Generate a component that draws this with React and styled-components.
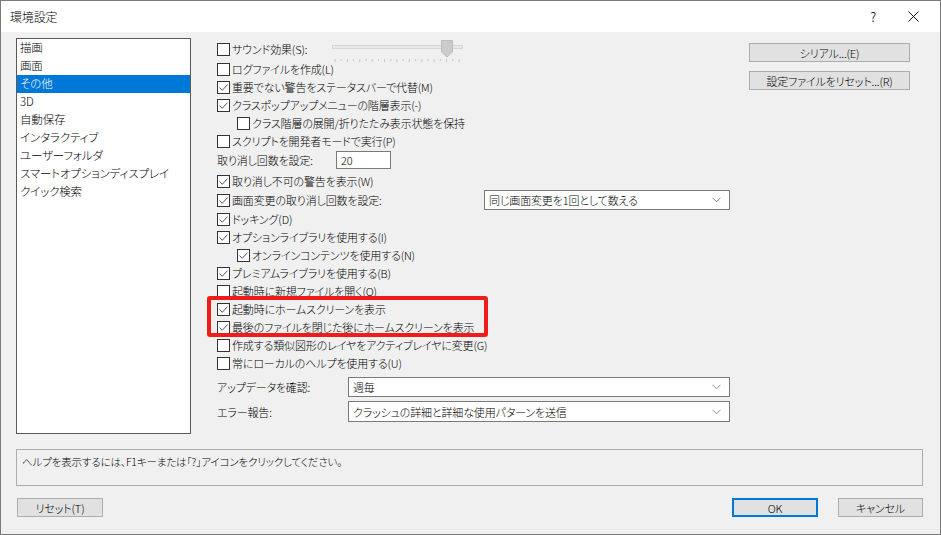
import styled, { createGlobalStyle } from 'styled-components';

const GlobalStyle = createGlobalStyle`
  html, body {
    margin: 0;
    padding: 0;
    background: #ffffff;
  }
  body {
    font-family: "Noto Sans CJK JP", "Noto Sans", sans-serif;
    font-size: 11px;
    font-weight: 300;
    color: #000;
    font-feature-settings: "palt";
    letter-spacing: -0.15px;
  }
`;

//whole dialog
const Window = styled.div`
  width: 941px;
  height: 535px;
  box-sizing: border-box;
  border: 1px solid #7a7a7a;
  background: #f0f0f0;
  display: flex;
  flex-direction: column;
  overflow: hidden;
`;

const TitleBar = styled.div`
  height: 31px;
  flex: none;
  background: #ffffff;
  display: flex;
  align-items: center;
  padding-left: 9px;
  font-size: 12px;
  .title {
    flex: 1;
  }
  .help {
    width: 20px;
    font-size: 13px;
    text-align: center;
    margin-right: 20px;
  }
  .close {
    width: 20px;
    display: flex;
    justify-content: center;
    margin-right: 17px;
  }
`;

const Body = styled.div`
  flex: 1;
  display: flex;
  flex-direction: column;
  padding: 6px 17px 0 15px;
`;

const MainRow = styled.div`
  display: flex;
  height: 396px;
`;

const CategoryList = styled.ul`
  list-style: none;
  margin: 0;
  padding: 0;
  width: 175px;
  height: 396px;
  box-sizing: border-box;
  border: 1px solid #5a5a5a;
  background: #ffffff;
`;

const CategoryItem = styled.li`
  height: 18px;
  line-height: 17px;
  padding-left: 3px;
  font-size: 11.5px;
  background: ${(p) => (p.$active ? '#0078d7' : 'transparent')};
  color: ${(p) => (p.$active ? '#ffffff' : '#000000')};
`;

const Options = styled.div`
  position: relative;
  margin-left: 26px;
  width: 513px;
  display: flex;
  flex-direction: column;
`;

const Row = styled.div`
  display: flex;
  align-items: ${(p) => (p.$top ? 'flex-start' : 'center')};
  height: ${(p) => p.$h || 18}px;
  margin-top: ${(p) => p.$mt || 0}px;
  padding-left: ${(p) => (p.$indent ? 20 : 0)}px;
  padding-top: ${(p) => (p.$top ? 3 : 0)}px;
  box-sizing: border-box;
  white-space: nowrap;
`;

const CheckLabel = styled.label`
  display: flex;
  align-items: center;
  width: ${(p) => (p.$w ? `${p.$w}px` : 'auto')};
  flex: none;
`;

const Box = styled.span`
  width: 13px;
  height: 13px;
  box-sizing: border-box;
  border: 1px solid #333333;
  background: #ffffff;
  margin-right: 2px;
  display: flex;
  align-items: center;
  justify-content: center;
  flex: none;
`;

const FieldLabel = styled.span`
  width: ${(p) => p.$w}px;
  flex: none;
`;

const NumberField = styled.div`
  width: 55px;
  height: 18px;
  box-sizing: border-box;
  border: 1px solid #7a7a7a;
  background: #ffffff;
  padding-left: 4px;
  line-height: 16px;
`;

const Select = styled.div`
  width: ${(p) => p.$w}px;
  height: ${(p) => p.$h || 20}px;
  margin-left: ${(p) => p.$ml || 0}px;
  box-sizing: border-box;
  border: 1px solid #7a7a7a;
  background: #ffffff;
  display: flex;
  align-items: center;
  padding: 0 8px 0 4px;
  span {
    flex: 1;
  }
`;

const Highlight = styled.div`
  position: absolute;
  left: -10px;
  top: 258px;
  width: 281px;
  height: 41px;
  box-sizing: border-box;
  border: 4px solid #f21b1b;
  border-radius: 3px;
  pointer-events: none;
`;

const SideButtons = styled.div`
  margin-left: 19px;
  padding-top: 5px;
  display: flex;
  flex-direction: column;
  gap: 9px;
`;

const Button = styled.button`
  width: ${(p) => p.$w}px;
  height: ${(p) => p.$h || 19}px;
  box-sizing: border-box;
  border: 1px solid ${(p) => (p.$primary ? '#0078d7' : '#adadad')};
  box-shadow: ${(p) => (p.$primary ? 'inset 0 0 0 1px #0078d7' : 'none')};
  background: #e1e1e1;
  font-family: inherit;
  font-size: 11px;
  font-weight: 300;
  letter-spacing: -0.15px;
  font-feature-settings: "palt";
  color: #000;
  padding: 0;
  line-height: 16px;
`;

const HelpBox = styled.div`
  margin-top: 15px;
  width: 907px;
  height: 37px;
  box-sizing: border-box;
  border: 1px solid #adadad;
  padding: 4px 0 0 5px;
  font-size: 10.5px;
`;

const Footer = styled.div`
  margin-top: 12px;
  width: 907px;
  display: flex;
  align-items: center;
  padding-left: 1px;
  box-sizing: border-box;
  .spacer {
    flex: 1;
  }
  .right {
    display: flex;
    gap: 20px;
  }
`;

const Check = ({ on }) => (
  <Box>
    {on && (
      <svg width="11" height="11" viewBox="0 0 11 11">
        <polyline points="1.5,5.5 4.2,8.3 9.6,2.6" fill="none" stroke="#555" strokeWidth="1" />
      </svg>
    )}
  </Box>
);

const CheckItem = ({ on, children, w }) => (
  <CheckLabel $w={w}>
    <Check on={on} />
    <span>{children}</span>
  </CheckLabel>
);

const Chevron = () => (
  <svg width="9" height="6" viewBox="0 0 9 6">
    <polyline points="0.5,0.8 4.5,4.8 8.5,0.8" fill="none" stroke="#8a8a8a" strokeWidth="1" />
  </svg>
);

const Slider = () => {
  const ticks = [];
  for (let i = 0; i <= 20; i++) ticks.push(3 + i * 6.2);
  return (
    <svg width="134" height="26" viewBox="0 0 134 26" style={{ marginTop: -3 }}>
      <rect x="0.5" y="7.5" width="130" height="3" fill="#e7eaea" stroke="#d6d6d6" />
      {ticks.map((x, i) => (
        <line key={i} x1={x} y1="21" x2={x} y2={i % 2 ? 23 : 24} stroke="#c4c4c4" strokeWidth="1" />
      ))}
      <polygon points="109.5,2.5 120.5,2.5 120.5,14 115,19 109.5,14" fill="#cccccc" stroke="#bdbdbd" />
    </svg>
  );
};

const categories = [
  '描画',
  '画面',
  'その他',
  '3D',
  '自動保存',
  'インタラクティブ',
  'ユーザーフォルダ',
  'スマートオプションディスプレイ',
  'クイック検索',
];

const App = () => {
  return (
    <>
      <GlobalStyle />
      <Window>
        <TitleBar>
          <span className="title">環境設定</span>
          <span className="help">?</span>
          <span className="close">
            <svg width="11" height="11" viewBox="0 0 11 11">
              <path d="M0.5 0.5 L10.5 10.5 M10.5 0.5 L0.5 10.5" stroke="#111" strokeWidth="1" />
            </svg>
          </span>
        </TitleBar>
        <Body>
          <MainRow>
            <CategoryList>
              {categories.map((c) => (
                <CategoryItem key={c} $active={c === 'その他'}>
                  {c}
                </CategoryItem>
              ))}
            </CategoryList>

            <Options>
              <Row $h={22} $top>
                <CheckItem w={115}>サウンド効果(S):</CheckItem>
                <Slider />
              </Row>
              <Row>
                <CheckItem>ログファイルを作成(L)</CheckItem>
              </Row>
              <Row>
                <CheckItem on>重要でない警告をステータスバーで代替(M)</CheckItem>
              </Row>
              <Row>
                <CheckItem on>クラスポップアップメニューの階層表示(-)</CheckItem>
              </Row>
              <Row $indent>
                <CheckItem>クラス階層の展開/折りたたみ表示状態を保持</CheckItem>
              </Row>
              <Row>
                <CheckItem>スクリプトを開発者モードで実行(P)</CheckItem>
              </Row>
              <Row $h={20}>
                <FieldLabel $w={119}>取り消し回数を設定:</FieldLabel>
                <NumberField>20</NumberField>
              </Row>
              <Row $mt={2}>
                <CheckItem on>取り消し不可の警告を表示(W)</CheckItem>
              </Row>
              <Row $h={20}>
                <CheckItem on w={267}>画面変更の取り消し回数を設定:</CheckItem>
                <Select $w={246}>
                  <span>同じ画面変更を1回として数える</span>
                  <Chevron />
                </Select>
              </Row>
              <Row>
                <CheckItem on>ドッキング(D)</CheckItem>
              </Row>
              <Row>
                <CheckItem on>オプションライブラリを使用する(I)</CheckItem>
              </Row>
              <Row $indent>
                <CheckItem on>オンラインコンテンツを使用する(N)</CheckItem>
              </Row>
              <Row>
                <CheckItem on>プレミアムライブラリを使用する(B)</CheckItem>
              </Row>
              <Row>
                <CheckItem>起動時に新規ファイルを開く(O)</CheckItem>
              </Row>
              <Row>
                <CheckItem on>起動時にホームスクリーンを表示</CheckItem>
              </Row>
              <Row>
                <CheckItem on>最後のファイルを閉じた後にホームスクリーンを表示</CheckItem>
              </Row>
              <Row>
                <CheckItem>作成する類似図形のレイヤをアクティブレイヤに変更(G)</CheckItem>
              </Row>
              <Row>
                <CheckItem>常にローカルのヘルプを使用する(U)</CheckItem>
              </Row>
              <Row $h={20} $mt={5}>
                <FieldLabel $w={131}>アップデータを確認:</FieldLabel>
                <Select $w={382}>
                  <span>週毎</span>
                  <Chevron />
                </Select>
              </Row>
              <Row $h={21} $mt={4}>
                <FieldLabel $w={131}>エラー報告:</FieldLabel>
                <Select $w={382} $h={21}>
                  <span>クラッシュの詳細と詳細な使用パターンを送信</span>
                  <Chevron />
                </Select>
              </Row>

              <Highlight />
            </Options>

            <SideButtons>
              <Button $w={161}>シリアル...(E)</Button>
              <Button $w={161}>設定ファイルをリセット...(R)</Button>
            </SideButtons>
          </MainRow>

          <HelpBox>ヘルプを表示するには、F1キーまたは「?」アイコンをクリックしてください。</HelpBox>

          <Footer>
            <Button $w={86}>リセット(T)</Button>
            <div className="spacer" />
            <div className="right">
              <Button $w={86} $primary>OK</Button>
              <Button $w={85}>キャンセル</Button>
            </div>
          </Footer>
        </Body>
      </Window>
    </>
  );
};

export default App;
